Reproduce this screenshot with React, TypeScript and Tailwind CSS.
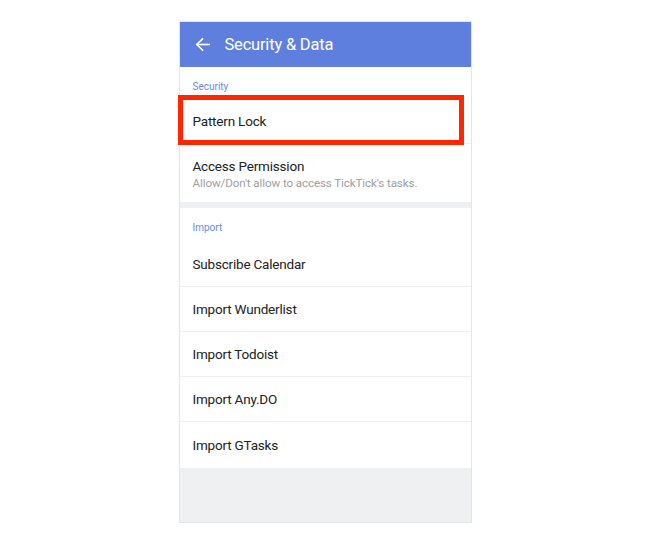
import React from "react";

const rows = ["Subscribe Calendar", "Import Wunderlist", "Import Todoist", "Import Any.DO", "Import GTasks"];

export default function App() {
  return (
    <div className="w-[650px] h-[544px] bg-white flex justify-center" style={{ fontFamily: "Roboto, 'Liberation Sans', sans-serif" }}>
      <div className="mt-[21px] w-[293px] h-[502px] border border-[#e3e5e8] flex flex-col bg-white">
        <div className="h-[45px] bg-[#5f7fdf] flex items-center shrink-0">
          <svg className="ml-[15px]" width="15" height="15" viewBox="0 0 16 16" fill="none" stroke="white" strokeWidth="1.8" strokeLinecap="square">
            <path d="M15 8H2.5" />
            <path d="M8 2L2 8l6 6" />
          </svg>
          <span className="ml-[15px] text-white text-[16.5px] tracking-[-0.2px] leading-[20px]">Security &amp; Data</span>
        </div>
        <div className="pt-[14px] pb-[7px] pl-[13px] text-[10px] leading-[12px] text-[#6b8be6]">Security</div>
        <div className="relative h-[44px] flex items-center pl-[13px] border-b border-[#f0f0f0]">
          <span className="text-[13.5px] tracking-[-0.2px] text-[#222]">Pattern Lock</span>
          <div className="absolute left-[-2px] top-[-5px] w-[286px] h-[50px] border-[5px] border-[#ff2600]" />
        </div>
        <div className="pt-[13px] pb-[11px] pl-[13px] flex flex-col">
          <span className="text-[13.5px] tracking-[-0.2px] leading-[18px] text-[#222]">Access Permission</span>
          <span className="text-[11.6px] tracking-[-0.1px] leading-[16px] text-[#a0a0a0]">Allow/Don't allow to access TickTick's tasks.</span>
        </div>
        <div className="h-[6px] bg-[#eff0f2]" />
        <div className="pt-[14px] pb-[8px] pl-[13px] text-[10px] leading-[12px] text-[#6b8be6]">Import</div>
        {rows.map((r, i) => (
          <div
            key={r}
            className={
              i < rows.length - 1
                ? "h-[45px] flex items-center pl-[13px] border-b border-[#f0f0f0]"
                : "h-[46px] flex items-center pl-[13px]"
            }
          >
            <span className="text-[13.5px] tracking-[-0.2px] text-[#222]">{r}</span>
          </div>
        ))}
        <div className="flex-1 bg-[#eff0f2]" />
      </div>
    </div>
  );
}
